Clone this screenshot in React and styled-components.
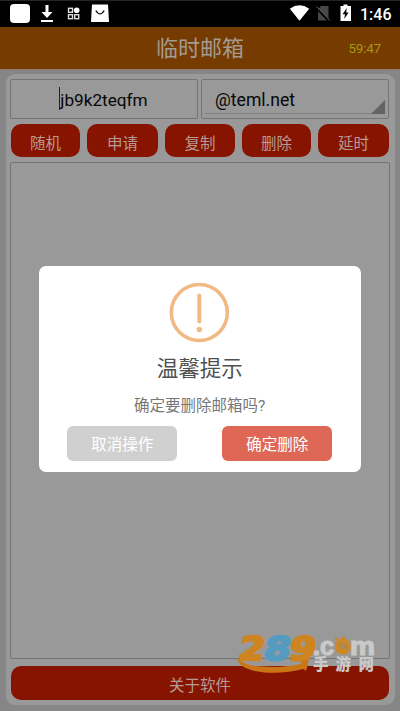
import styled, { createGlobalStyle } from 'styled-components';

const GlobalStyle = createGlobalStyle`
	* {
		box-sizing: border-box;
	}

	body {
		margin: 0;
		font-family: Roboto, 'Noto Sans CJK SC', sans-serif;
	}

	button {
		padding: 0;
		border: 0;
		font-family: inherit;
	}
`;

const Screen = styled.div`
	position: relative;
	display: flex;
	flex-direction: column;
	width: 400px;
	height: 711px;
	overflow: hidden;
	background: #868686;
`;

const StatusBar = styled.div`
	display: flex;
	justify-content: space-between;
	height: 27px;
	background: #000;
	border-top: 1px solid #242424;
`;

const Clock = styled.span`
	width: 32px;
	margin-right: 8px;
	font-size: 16px;
	font-weight: 500;
	line-height: 27px;
	white-space: nowrap;
	color: #fff;
`;

const StatusRight = styled.div`
	display: flex;
`;

const Header = styled.header`
	display: grid;
	grid-template-columns: 1fr auto 1fr;
	align-items: center;
	height: 43px;
	padding: 0 19px;
	background: #753b00;
	border-bottom: 1px solid #947b67;
`;

const Title = styled.h1`
	grid-column: 2;
	margin: 0;
	padding-top: 2px;
	font-size: 22px;
	font-weight: 400;
	line-height: 40px;
	color: #a39a92;
`;

const Countdown = styled.span`
	justify-self: end;
	margin-top: -1px;
	font-size: 13.5px;
	letter-spacing: -0.2px;
	color: #a59a0c;
`;

const Panel = styled.main`
	flex: 1;
	display: flex;
	flex-direction: column;
	margin: 4px 5px 6px 6px;
	padding: 5px 5px 5px 4px;
	background: #999;
	border-radius: 9px;
`;

const Fields = styled.div`
	display: grid;
	grid-template-columns: 188px 188px;
	gap: 3px;
	height: 40px;
`;

const Field = styled.div`
	display: flex;
	align-items: center;
	justify-content: ${({ $center }) => ($center ? 'center' : 'flex-start')};
	padding: ${({ $center }) => ($center ? '1px 1px 0 0' : '1px 0 0 13px')};
	position: relative;
	font-size: ${({ $center }) => ($center ? 17.2 : 17.6)}px;
	color: #070707;
	background: #999;
	border: 1px solid #747474;
	border-radius: 2px;
`;

const Caret = styled.span`
	width: 1px;
	height: 23px;
	margin-top: -3px;
	background: #222;
`;

const SpinnerMark = styled.svg`
	position: absolute;
	left: 3px;
	bottom: 3px;
`;

const Actions = styled.div`
	display: grid;
	grid-template-columns: 69px 71px 70px 69px 71px;
	justify-content: space-between;
	margin: 5px 1px 5px;
`;

const RedButton = styled.button`
	height: ${({ $height = 33 }) => $height}px;
	padding-top: ${({ $shift = 7 }) => $shift}px;
	font-size: 15.5px;
	line-height: 26px;
	color: #b69a94;
	background: #861400;
	border-radius: 10px;
`;

const MailList = styled.div`
	flex: 1;
	margin-bottom: 7px;
	border: 1px solid #747474;
	border-radius: 2px;
`;

const Footer = styled.div`
	display: grid;
	margin: 0 1px;
`;

const Dialog = styled.section`
	position: absolute;
	top: 266px;
	left: 38.5px;
	display: flex;
	flex-direction: column;
	align-items: center;
	width: 322.5px;
	height: 206px;
	padding-top: 16px;
	background: #fff;
	border-radius: 7px;
`;

const DialogTitle = styled.h2`
	margin: 9px 0 0;
	font-size: 21.5px;
	font-weight: 400;
	line-height: 32px;
	color: #505050;
`;

const Message = styled.p`
	margin: 9px 0 0;
	font-size: 15.5px;
	line-height: 24px;
	color: #777;
`;

const DialogActions = styled.div`
	display: flex;
	gap: 45px;
	margin-top: 8px;
`;

const DialogButton = styled.button`
	width: 110px;
	height: 35px;
	padding-top: 3px;
	font-size: 15.5px;
	line-height: 32px;
	color: #fff;
	background: ${({ $danger }) => ($danger ? '#de6855' : '#d0d0d0')};
	border-radius: 6px;
`;

const Watermark = styled.svg`
	position: absolute;
	left: 232px;
	top: 628px;
`;

const actions = ['随机', '申请', '复制', '删除', '延时'];

const digits = [
	{ value: '2', x: 0, color: '#ce8420' },
	{ value: '8', x: 25.5, color: '#559bc0' },
	{ value: '9', x: 51, color: '#ce8420' },
];

const NotificationIcons = () => (
	<svg width='115' height='26' viewBox='0 1 115 26'>
		<rect x='10' y='4' width='20' height='19' rx='4' fill='#fff' />
		<path
			d='M45.5 5h3v7h4l-5.5 6-5.5-6h4zM41 20h12v2H41z'
			fill='#fff'
		/>
		<g fill='none' stroke='#ddd' strokeWidth='1.4'>
			<rect x='68.5' y='8.3' width='4' height='4' />
			<rect x='68.5' y='14.7' width='4' height='4' />
			<rect x='74.7' y='14.7' width='4' height='4' />
		</g>
		<circle cx='76.7' cy='10.2' r='2.8' fill='#fff' />
		<path d='M92 4.5h16l1 17.500H91z' fill='#fff' />
		<path
			d='M95.8 10.5q4.2 6.8 8.4 0'
			fill='none'
			stroke='#111'
			strokeWidth='1.4'
		/>
	</svg>
);

const SystemIcons = () => (
	<svg width='71' height='26' viewBox='290 1 71 26'>
		<path d='M290.8 8.7Q300.5 2 310.2 8.7L300.5 20.7z' fill='#fff' />
		<path d='M322 6h7.5v14.5H319V9.5z' fill='#474747' />
		<path d='M316.5 7l13.5 14' stroke='#000' strokeWidth='2.5' />
		<path d='M317.5 6.5L331 20.5' stroke='#666' strokeWidth='1' />
		<path d='M341.5 6h3V4.5h4V6h3.5v15h-10.5z' fill='#fff' />
		<path d='M347.8 8l-4.3 6.2h2.5L345.2 19l4.4-6.5h-2.4z' fill='#000' />
	</svg>
);

const WarningIcon = () => (
	<svg width='62' height='62' viewBox='0 0 62 62'>
		<circle
			cx='30.3'
			cy='30.5'
			r='28'
			fill='none'
			stroke='#f1b984'
			strokeWidth='3.6'
		/>
		<path
			d='M30.3 13.5v26'
			stroke='#f1b984'
			strokeWidth='4'
			strokeLinecap='round'
		/>
		<circle cx='30.3' cy='47.5' r='2.8' fill='#f1b984' />
	</svg>
);

const SiteMark = () => (
	<Watermark width='150' height='56' viewBox='232 628 150 56'>
		<g
			transform='translate(237 660) skewX(-11)'
			fontFamily='DejaVu Sans, sans-serif'
			fontSize='32.5'
			fontWeight='700'
			strokeWidth='2.4'
			strokeLinejoin='round'
		>
			{digits.map(({ value, x, color }) => (
				<text
					key={value}
					x={x}
					fill={color}
					stroke={color}
					textLength='26'
					lengthAdjust='spacingAndGlyphs'
				>
					{value}
				</text>
			))}
		</g>
		<path
			d='M237 658Q244 666 263 666.500Q286 668 302 663.500L300.500 661.500L309 659L306 671L303.500 669Q287 673.500 265 672.500Q239 670 237 658z'
			fill='#ca7617'
		/>
		<g
			fill='#c9c9c9'
			stroke='#c9c9c9'
			fontFamily='Liberation Sans, Arial, sans-serif'
			fontWeight='700'
			fontSize='26'
			strokeWidth='1.2'
		>
			<text x='313' y='654.5' textLength='21' lengthAdjust='spacingAndGlyphs'>
				.c
			</text>
			<text x='350' y='654.5' textLength='25' lengthAdjust='spacingAndGlyphs'>
				m
			</text>
		</g>
		<circle
			cx='342.8'
			cy='646.5'
			r='6.6'
			fill='#a98853'
			stroke='#d18822'
			strokeWidth='3'
		/>
		<path
			d='M336 640.5l-2-3.5 4.500 1.500zM341 639l2.500-3 2.500 3z'
			fill='#ce8420'
		/>
		<path
			d='M348 650q-7 1-7-4q0-3 4-3M345 652q-7-1-7-6'
			fill='none'
			stroke='#d18822'
			strokeWidth='1.7'
		/>
		<text
			x='313 335.5 358.5'
			y='669.5'
			fill='#c9c9c9'
			fontFamily='Noto Sans CJK SC, sans-serif'
			fontWeight='900'
			fontSize='15.5'
		>
			手游网
		</text>
	</Watermark>
);

const ConfirmDialog = () => (
	<Dialog role='dialog'>
		<WarningIcon />
		<DialogTitle>温馨提示</DialogTitle>
		<Message>确定要删除邮箱吗?</Message>
		<DialogActions>
			<DialogButton>取消操作</DialogButton>
			<DialogButton $danger>确定删除</DialogButton>
		</DialogActions>
	</Dialog>
);

const App = () => {
	return (
		<>
			<GlobalStyle />
			<Screen>
				<StatusBar>
					<NotificationIcons />
					<StatusRight>
						<SystemIcons />
						<Clock>1:46</Clock>
					</StatusRight>
				</StatusBar>

				<Header>
					<Title>临时邮箱</Title>
					<Countdown>59:47</Countdown>
				</Header>

				<Panel>
					<Fields>
						<Field $center>
							<Caret />
							jb9k2teqfm
						</Field>
						<Field>
							@teml.net
							<SpinnerMark width='182' height='16' viewBox='0 0 182 16'>
								<path d='M0 14.5h168' stroke='#808080' />
								<path d='M180 1v14h-14z' fill='#636363' />
							</SpinnerMark>
						</Field>
					</Fields>

					<Actions>
						{actions.map((label) => (
							<RedButton key={label}>{label}</RedButton>
						))}
					</Actions>

					<MailList />

					<Footer>
						<RedButton $height={34} $shift={6}>
							关于软件
						</RedButton>
					</Footer>
				</Panel>

				<SiteMark />
				<ConfirmDialog />
			</Screen>
		</>
	);
};

export default App;
